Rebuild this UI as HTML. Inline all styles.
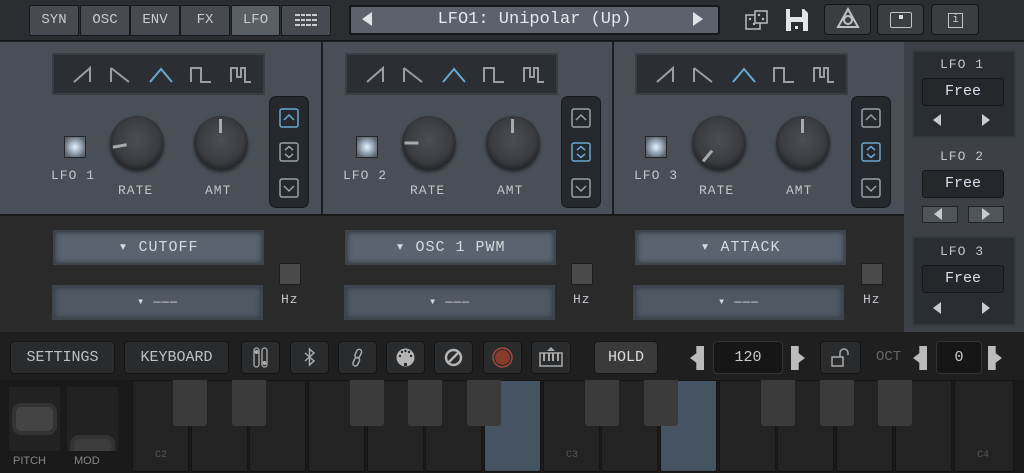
<!DOCTYPE html>
<html><head><meta charset="utf-8"><style>
*{margin:0;padding:0;box-sizing:border-box}
body{width:1024px;height:473px;overflow:hidden;background:#1e1f20;font-family:"Liberation Mono",monospace;color:#c8ccd0;position:relative}
.a{position:absolute}
.tab{position:absolute;top:5px;height:31px;background:#474a50;border:1px solid #17181a;border-radius:2px;color:#c8cbd0;font-size:14px;text-align:center;line-height:29px}
.btn{position:absolute;background:#2a2b2d;border:1px solid #141414;border-radius:4px;color:#bfc2c5;text-align:center}
.wave{position:absolute;top:53px;width:213px;height:42px;background:#2b2e32;border:2px solid #3a3e44}
.knob{position:absolute;width:54px;height:54px;border-radius:50%;background:radial-gradient(circle at 50% 45%,#4b4e53 0,#3a3c40 55%,#222326 75%,#101112 100%);box-shadow:0 2px 3px rgba(0,0,0,.5)}
.knob i{position:absolute;left:25px;top:3px;width:3px;height:14px;background:#aaa;transform-origin:1.5px 24px}
.lbl{position:absolute;font-size:13px;color:#c2c6cb;letter-spacing:1px}
.led{position:absolute;width:22px;height:22px;background:radial-gradient(circle,#e8f2ff 0,#a8b8c8 35%,#5d6670 80%);border:1px solid #22252a}
.arr{position:absolute;top:96px;width:40px;height:112px;background:#25282c;border:1px solid #17191b;border-radius:7px}
.arr svg{position:absolute;left:9px}
.dd{position:absolute;width:211px;height:35px;background:#5a6470;border:2px solid #3e454d;box-shadow:inset 0 0 6px #2d3238;color:#d5dadf;font-size:15px;text-align:center;line-height:31px;letter-spacing:1px}
.dd2{background:#4f5863;font-size:12px}
.hz{position:absolute;width:22px;height:22px;background:#4a4a4a;border:1px solid #1d1d1d;border-radius:2px}
.wk{position:absolute;top:380px;height:92px;width:57px;background:#232323;border:1px solid #141414;border-radius:0 0 3px 3px}
.bk{position:absolute;top:380px;height:46px;width:34px;background:#3b3b3b;border-radius:0 0 3px 3px}
.sb{position:absolute;left:922px;width:82px;height:28px;background:#25282b;border:1px solid #15171a;border-radius:3px;font-size:15px;text-align:center;line-height:26px;color:#dde}
</style></head><body>
<div class="a" style="left:0;top:0;width:1024px;height:41px;background:#2b2d31;border-bottom:1px solid #15161a"></div>
<div class="tab" style="left:29px;width:50px">SYN</div>
<div class="tab" style="left:80px;width:50px">OSC</div>
<div class="tab" style="left:130px;width:50px">ENV</div>
<div class="tab" style="left:180px;width:50px">FX</div>
<div class="tab" style="left:231px;width:49px;background:#5a5e65">LFO</div>
<div class="tab" style="left:281px;width:50px"><svg width="48" height="29"><g fill="#c8cbd0"><rect x="13" y="8" width="22" height="2"/><rect x="13" y="13" width="22" height="2"/><rect x="13" y="18" width="22" height="2"/></g><g fill="#474a50"><rect x="18" y="7" width="1" height="14"/><rect x="23" y="7" width="1" height="14"/><rect x="29" y="7" width="1" height="14"/></g></svg></div>
<div class="a" style="left:349px;top:5px;width:371px;height:30px;background:#5b626b;border:2px solid #15171a;border-radius:3px;font-size:17px;color:#e6e9ec;text-align:center;line-height:26px">LFO1: Unipolar (Up)</div>
<div class="a" style="left:362px;top:12px;width:0;height:0;border-top:7px solid transparent;border-bottom:7px solid transparent;border-right:10px solid #e0e3e6"></div>
<div class="a" style="left:693px;top:12px;width:0;height:0;border-top:7px solid transparent;border-bottom:7px solid transparent;border-left:10px solid #e0e3e6"></div>
<svg class="a" style="left:745px;top:9px" width="26" height="24"><rect x="1" y="6" width="14" height="14" fill="none" stroke="#bbb" stroke-width="1.5"/><rect x="10" y="2" width="12" height="12" fill="#2b2d31" stroke="#bbb" stroke-width="1.5"/><circle cx="5" cy="10" r="1.2" fill="#bbb"/><circle cx="9" cy="15" r="1.2" fill="#bbb"/><circle cx="14" cy="6" r="1.2" fill="#bbb"/><circle cx="18" cy="10" r="1.2" fill="#bbb"/></svg>
<svg class="a" style="left:785px;top:8px" width="24" height="24"><path d="M1 1h18l4 4v18h-22z" fill="#e2e4e6"/><rect x="5" y="1" width="12" height="8" fill="#2b2d31"/><rect x="6" y="14" width="12" height="9" fill="#2b2d31"/><rect x="10" y="18" width="3" height="3" fill="#e2e4e6"/></svg>
<div class="btn" style="left:824px;top:4px;width:47px;height:31px;background:#3b3d41"><svg width="30" height="28" style="margin-top:1px"><g fill="none" stroke="#c0c3c6" stroke-width="2"><circle cx="15" cy="14" r="4"/><path d="M15 3 L25 21 L5 21 Z"/></g></svg></div>
<div class="btn" style="left:877px;top:4px;width:47px;height:31px;background:#3b3d41"><div class="a" style="left:12px;top:7px;width:22px;height:16px;border:1.5px solid #c0c3c6;border-radius:2px"></div><div class="a" style="left:21px;top:10px;width:4px;height:4px;background:#ddd"></div></div>
<div class="btn" style="left:931px;top:4px;width:48px;height:31px;background:#3b3d41"><div class="a" style="left:16px;top:8px;width:15px;height:15px;border:1.5px solid #c0c3c6;font-size:11px;line-height:12px;color:#ccc">i</div></div>

<div class="a" style="left:0;top:42px;width:321px;height:173px;background:#4a4f57"></div>
<div class="a" style="left:323px;top:42px;width:290px;height:173px;background:#4a4f57"></div>
<div class="a" style="left:614px;top:42px;width:290px;height:173px;background:#4a4f57"></div>
<div class="a" style="left:321px;top:42px;width:2px;height:290px;background:#1c1d1f"></div>
<div class="a" style="left:612px;top:42px;width:2px;height:290px;background:#1c1d1f"></div>
<div class="a" style="left:0;top:214px;width:904px;height:118px;background:#2a2a2b;border-top:2px solid #1a1a1a"></div>

<!-- panel 1 -->
<div class="wave" style="left:52px"><svg width="209" height="38"><g fill="none" stroke="#9a9ea3" stroke-width="2"><path d="M20 27 L36 13 L36 27"/><path d="M57 13 V27 M57 13 L75 27"/><path d="M96 27 L107 14 L118 27" stroke="#6aa8d0"/><path d="M137 27 V13 H147 V27 H157"/><path d="M177 27 V13 H183 V22 H187 V13 H191 V27 H197"/></g></svg></div>
<div class="led" style="left:64px;top:136px"></div>
<div class="lbl" style="left:51px;top:168px">LFO 1</div>
<div class="knob" style="left:110px;top:116px"><i style="transform:rotate(-100deg)"></i></div>
<div class="knob" style="left:194px;top:116px"><i></i></div>
<div class="lbl" style="left:118px;top:183px">RATE</div>
<div class="lbl" style="left:205px;top:183px">AMT</div>
<div class="arr" style="left:269px">
<svg style="top:11px" width="20" height="20"><rect x="1" y="1" width="18" height="18" rx="2" fill="none" stroke="#6aa8d0" stroke-width="1.5"/><path d="M5 12 L10 7 L15 12" fill="none" stroke="#6aa8d0" stroke-width="1.5"/></svg>
<svg style="top:45px" width="20" height="20"><rect x="1" y="1" width="18" height="18" rx="2" fill="none" stroke="#9aa0a6" stroke-width="1.5"/><path d="M6 8 L10 4.5 L14 8 M6 12 L10 15.5 L14 12" fill="none" stroke="#9aa0a6" stroke-width="1.5"/></svg>
<svg style="top:81px" width="20" height="20"><rect x="1" y="1" width="18" height="18" rx="2" fill="none" stroke="#9aa0a6" stroke-width="1.5"/><path d="M5 8 L10 13 L15 8" fill="none" stroke="#9aa0a6" stroke-width="1.5"/></svg></div>
<div class="dd" style="left:53px;top:230px">▾ CUTOFF</div>
<div class="dd dd2" style="left:52px;top:285px">▾ ———</div>
<div class="hz" style="left:279px;top:263px"></div>
<div class="lbl" style="left:281px;top:292px">Hz</div>

<!-- panel 2 -->
<div class="wave" style="left:345px"><svg width="209" height="38"><g fill="none" stroke="#9a9ea3" stroke-width="2"><path d="M20 27 L36 13 L36 27"/><path d="M57 13 V27 M57 13 L75 27"/><path d="M96 27 L107 14 L118 27" stroke="#6aa8d0"/><path d="M137 27 V13 H147 V27 H157"/><path d="M177 27 V13 H183 V22 H187 V13 H191 V27 H197"/></g></svg></div>
<div class="led" style="left:356px;top:136px"></div>
<div class="lbl" style="left:343px;top:168px">LFO 2</div>
<div class="knob" style="left:402px;top:116px"><i style="transform:rotate(-90deg)"></i></div>
<div class="knob" style="left:486px;top:116px"><i></i></div>
<div class="lbl" style="left:410px;top:183px">RATE</div>
<div class="lbl" style="left:497px;top:183px">AMT</div>
<div class="arr" style="left:561px">
<svg style="top:11px" width="20" height="20"><rect x="1" y="1" width="18" height="18" rx="2" fill="none" stroke="#9aa0a6" stroke-width="1.5"/><path d="M5 12 L10 7 L15 12" fill="none" stroke="#9aa0a6" stroke-width="1.5"/></svg>
<svg style="top:45px" width="20" height="20"><rect x="1" y="1" width="18" height="18" rx="2" fill="none" stroke="#6aa8d0" stroke-width="1.5"/><path d="M6 8 L10 4.5 L14 8 M6 12 L10 15.5 L14 12" fill="none" stroke="#6aa8d0" stroke-width="1.5"/></svg>
<svg style="top:81px" width="20" height="20"><rect x="1" y="1" width="18" height="18" rx="2" fill="none" stroke="#9aa0a6" stroke-width="1.5"/><path d="M5 8 L10 13 L15 8" fill="none" stroke="#9aa0a6" stroke-width="1.5"/></svg></div>
<div class="dd" style="left:345px;top:230px">▾ OSC 1 PWM</div>
<div class="dd dd2" style="left:344px;top:285px">▾ ———</div>
<div class="hz" style="left:571px;top:263px"></div>
<div class="lbl" style="left:573px;top:292px">Hz</div>

<!-- panel 3 -->
<div class="wave" style="left:635px"><svg width="209" height="38"><g fill="none" stroke="#9a9ea3" stroke-width="2"><path d="M20 27 L36 13 L36 27"/><path d="M57 13 V27 M57 13 L75 27"/><path d="M96 27 L107 14 L118 27" stroke="#6aa8d0"/><path d="M137 27 V13 H147 V27 H157"/><path d="M177 27 V13 H183 V22 H187 V13 H191 V27 H197"/></g></svg></div>
<div class="led" style="left:645px;top:136px"></div>
<div class="lbl" style="left:634px;top:168px">LFO 3</div>
<div class="knob" style="left:692px;top:116px"><i style="transform:rotate(-140deg)"></i></div>
<div class="knob" style="left:776px;top:116px"><i></i></div>
<div class="lbl" style="left:699px;top:183px">RATE</div>
<div class="lbl" style="left:786px;top:183px">AMT</div>
<div class="arr" style="left:851px">
<svg style="top:11px" width="20" height="20"><rect x="1" y="1" width="18" height="18" rx="2" fill="none" stroke="#9aa0a6" stroke-width="1.5"/><path d="M5 12 L10 7 L15 12" fill="none" stroke="#9aa0a6" stroke-width="1.5"/></svg>
<svg style="top:45px" width="20" height="20"><rect x="1" y="1" width="18" height="18" rx="2" fill="none" stroke="#6aa8d0" stroke-width="1.5"/><path d="M6 8 L10 4.5 L14 8 M6 12 L10 15.5 L14 12" fill="none" stroke="#6aa8d0" stroke-width="1.5"/></svg>
<svg style="top:81px" width="20" height="20"><rect x="1" y="1" width="18" height="18" rx="2" fill="none" stroke="#9aa0a6" stroke-width="1.5"/><path d="M5 8 L10 13 L15 8" fill="none" stroke="#9aa0a6" stroke-width="1.5"/></svg></div>
<div class="dd" style="left:635px;top:230px">▾ ATTACK</div>
<div class="dd dd2" style="left:633px;top:285px">▾ ———</div>
<div class="hz" style="left:861px;top:263px"></div>
<div class="lbl" style="left:863px;top:292px">Hz</div>

<!-- sidebar -->
<div class="a" style="left:904px;top:42px;width:120px;height:290px;background:#3d4147"></div>
<div class="a" style="left:912px;top:50px;width:104px;height:88px;background:#2a2d31;border:2px solid #353a40"></div>
<div class="lbl" style="left:940px;top:57px">LFO 1</div>
<div class="sb" style="top:78px">Free</div>
<div class="a" style="left:933px;top:114px;border-top:6px solid transparent;border-bottom:6px solid transparent;border-right:8px solid #c8ccd0"></div>
<div class="a" style="left:982px;top:114px;border-top:6px solid transparent;border-bottom:6px solid transparent;border-left:8px solid #c8ccd0"></div>
<div class="lbl" style="left:940px;top:149px">LFO 2</div>
<div class="sb" style="top:170px">Free</div>
<div class="a" style="left:922px;top:206px;width:36px;height:17px;background:#50555c;border:1px solid #222"></div>
<div class="a" style="left:968px;top:206px;width:36px;height:17px;background:#50555c;border:1px solid #222"></div>
<div class="a" style="left:934px;top:208px;border-top:6px solid transparent;border-bottom:6px solid transparent;border-right:8px solid #c8ccd0"></div>
<div class="a" style="left:982px;top:208px;border-top:6px solid transparent;border-bottom:6px solid transparent;border-left:8px solid #c8ccd0"></div>
<div class="a" style="left:912px;top:236px;width:104px;height:90px;background:#2a2d31;border:2px solid #353a40"></div>
<div class="lbl" style="left:940px;top:244px">LFO 3</div>
<div class="sb" style="top:265px">Free</div>
<div class="a" style="left:933px;top:302px;border-top:6px solid transparent;border-bottom:6px solid transparent;border-right:8px solid #c8ccd0"></div>
<div class="a" style="left:982px;top:302px;border-top:6px solid transparent;border-bottom:6px solid transparent;border-left:8px solid #c8ccd0"></div>

<!-- bottom bar -->
<div class="a" style="left:0;top:332px;width:1024px;height:48px;background:#1f1f20"></div>
<div class="btn" style="left:10px;top:341px;width:105px;height:33px;font-size:15px;line-height:31px">SETTINGS</div>
<div class="btn" style="left:124px;top:341px;width:105px;height:33px;font-size:15px;line-height:31px">KEYBOARD</div>
<div class="btn" style="left:241px;top:341px;width:39px;height:33px"><svg width="37" height="31"><g fill="none" stroke="#999" stroke-width="1.5"><rect x="12" y="6" width="5" height="19" rx="2.5"/><rect x="20" y="6" width="5" height="19" rx="2.5"/></g><circle cx="14.5" cy="10" r="2" fill="#aaa"/><circle cx="22.5" cy="21" r="2" fill="#aaa"/></svg></div>
<div class="btn" style="left:290px;top:341px;width:39px;height:33px"><svg width="37" height="31"><path d="M14 11 L23 19 L18.5 23 V7 L23 11 L14 19" fill="none" stroke="#aaa" stroke-width="1.5"/></svg></div>
<div class="btn" style="left:338px;top:341px;width:39px;height:33px"><svg width="37" height="31"><g fill="none" stroke="#aaa" stroke-width="1.5"><rect x="17" y="7" width="5" height="9" rx="2.5" transform="rotate(25 19 11)"/><rect x="15" y="15" width="5" height="9" rx="2.5" transform="rotate(25 17 19)"/></g></svg></div>
<div class="btn" style="left:386px;top:341px;width:39px;height:33px"><svg width="37" height="31"><circle cx="18.5" cy="15.5" r="9" fill="#b5b5b5"/><g fill="#2a2b2d"><circle cx="13" cy="14" r="1.2"/><circle cx="24" cy="14" r="1.2"/><circle cx="15" cy="10" r="1.2"/><circle cx="22" cy="10" r="1.2"/><circle cx="18.5" cy="9" r="1.2"/><rect x="17" y="21" width="3" height="3"/></g></svg></div>
<div class="btn" style="left:434px;top:341px;width:39px;height:33px"><svg width="37" height="31"><circle cx="18.5" cy="15.5" r="7.5" fill="none" stroke="#b5b5b5" stroke-width="2.5"/><path d="M13 21 L24 10" stroke="#b5b5b5" stroke-width="2.5"/></svg></div>
<div class="btn" style="left:483px;top:341px;width:39px;height:33px"><svg width="37" height="31"><circle cx="18.5" cy="15.5" r="9.5" fill="none" stroke="#a04a38" stroke-width="1.5"/><circle cx="18.5" cy="15.5" r="7.5" fill="#8a3a2c"/></svg></div>
<div class="btn" style="left:531px;top:341px;width:40px;height:33px"><svg width="38" height="31"><path d="M15 9 L19 5 L23 9z" fill="#aaa"/><rect x="8" y="11" width="22" height="13" fill="none" stroke="#aaa" stroke-width="1.5"/><g stroke="#aaa" stroke-width="2"><path d="M12 11v8M17 11v8M21 11v8M26 11v8"/></g></svg></div>
<div class="btn" style="left:594px;top:341px;width:64px;height:33px;background:#3a3a3b;font-size:15px;line-height:31px;color:#ddd">HOLD</div>
<div class="a" style="left:690px;top:346px;width:14px;height:24px;background:#bbb;clip-path:polygon(100% 0,100% 100%,45% 100%,45% 70%,0 50%,45% 30%,45% 0)"></div>
<div class="btn" style="left:713px;top:341px;width:70px;height:33px;background:#161616;border-color:#333;font-size:15px;line-height:31px;color:#ccc">120</div>
<div class="a" style="left:791px;top:346px;width:14px;height:24px;background:#bbb;clip-path:polygon(0 0,0 100%,55% 100%,55% 70%,100% 50%,55% 30%,55% 0)"></div>
<div class="btn" style="left:820px;top:341px;width:41px;height:33px"><svg width="39" height="31"><rect x="11" y="15" width="11" height="9" fill="none" stroke="#aaa" stroke-width="1.5"/><path d="M19 15 V11 a4 4 0 0 1 8 0 V13" fill="none" stroke="#aaa" stroke-width="1.5"/></svg></div>
<div class="lbl" style="left:876px;top:349px;color:#666;font-size:14px;letter-spacing:0">OCT</div>
<div class="a" style="left:913px;top:346px;width:14px;height:24px;background:#bbb;clip-path:polygon(100% 0,100% 100%,45% 100%,45% 70%,0 50%,45% 30%,45% 0)"></div>
<div class="btn" style="left:936px;top:341px;width:46px;height:33px;background:#161616;border-color:#333;font-size:15px;line-height:31px;color:#ccc">0</div>
<div class="a" style="left:988px;top:346px;width:14px;height:24px;background:#bbb;clip-path:polygon(0 0,0 100%,55% 100%,55% 70%,100% 50%,55% 30%,55% 0)"></div>

<!-- keyboard -->
<div class="a" style="left:0;top:380px;width:1024px;height:93px;background:#1a1a1a"></div>
<div class="a" style="left:9px;top:387px;width:51px;height:64px;background:#222"></div>
<div class="a" style="left:12px;top:403px;width:45px;height:32px;border:4px solid #333;border-radius:9px;background:#444"></div>
<div class="a" style="left:67px;top:387px;width:51px;height:64px;background:#222"></div>
<div class="a" style="left:70px;top:435px;width:45px;height:16px;border:4px solid #333;border-bottom:none;border-radius:9px 9px 0 0;background:#3d3d3d"></div>
<div class="a" style="left:13px;top:455px;font-size:11px;color:#888;font-family:'Liberation Sans',sans-serif">PITCH</div>
<div class="a" style="left:74px;top:455px;font-size:11px;color:#888;font-family:'Liberation Sans',sans-serif">MOD</div>
<div class="wk" style="left:132px"></div><div class="wk" style="left:191px"></div><div class="wk" style="left:249px"></div><div class="wk" style="left:308px"></div><div class="wk" style="left:367px"></div><div class="wk" style="left:425px"></div><div class="wk" style="left:484px;background:#465363"></div><div class="wk" style="left:543px"></div><div class="wk" style="left:601px"></div><div class="wk" style="left:660px;background:#465363"></div><div class="wk" style="left:719px"></div><div class="wk" style="left:777px"></div><div class="wk" style="left:836px"></div><div class="wk" style="left:895px"></div><div class="wk" style="left:954px;width:60px"></div>
<div class="bk" style="left:173px"></div><div class="bk" style="left:232px"></div><div class="bk" style="left:350px"></div><div class="bk" style="left:408px"></div><div class="bk" style="left:467px"></div><div class="bk" style="left:585px"></div><div class="bk" style="left:644px"></div><div class="bk" style="left:761px"></div><div class="bk" style="left:820px"></div><div class="bk" style="left:878px"></div>
<div class="a" style="left:155px;top:450px;font-size:10px;color:#555">C2</div>
<div class="a" style="left:566px;top:450px;font-size:10px;color:#555">C3</div>
<div class="a" style="left:977px;top:450px;font-size:10px;color:#555">C4</div>
</body></html>
